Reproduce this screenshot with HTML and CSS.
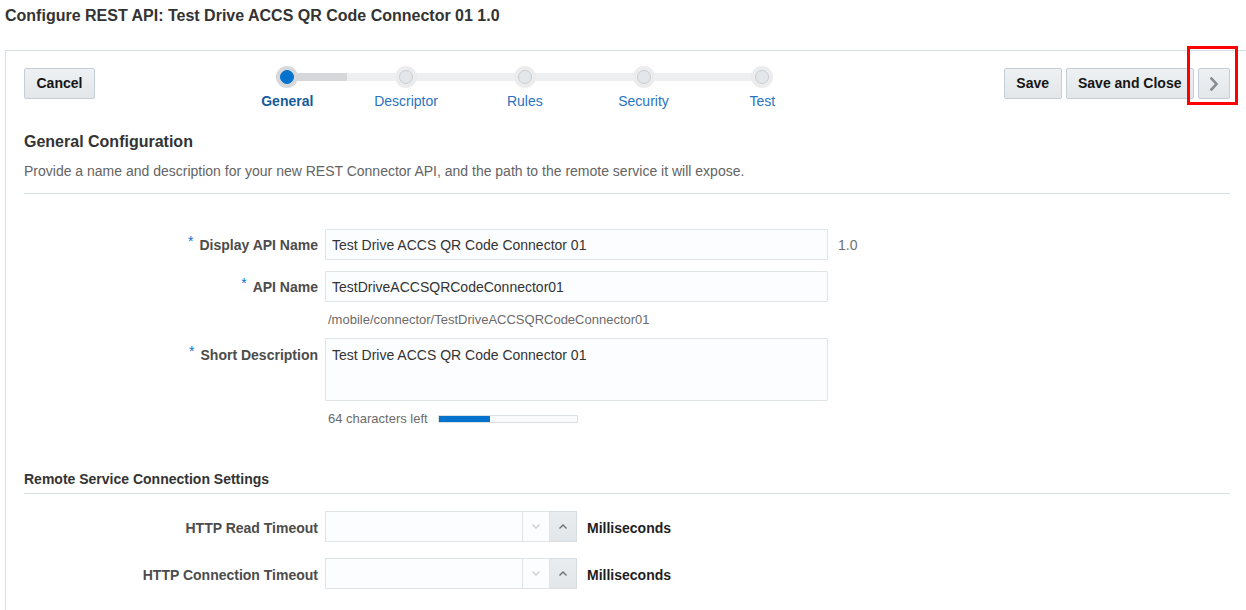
FILE: index.html
```html
<!DOCTYPE html>
<html lang="en">
<head>
<meta charset="utf-8">
<title>Configure REST API</title>
<link rel="stylesheet" href="styles.css">
</head>
<body>
<div class="page">
  <h1 class="title">Configure REST API: Test Drive ACCS QR Code Connector 01 1.0</h1>
  <div class="panel">
    <div class="header">
      <button class="btn btn-cancel">Cancel</button>
      <div class="train">
        <div class="step active"><span class="dot"></span><span class="step-label">General</span></div>
        <div class="step"><span class="dot"></span><span class="step-label">Descriptor</span></div>
        <div class="step"><span class="dot"></span><span class="step-label">Rules</span></div>
        <div class="step"><span class="dot"></span><span class="step-label">Security</span></div>
        <div class="step"><span class="dot"></span><span class="step-label">Test</span></div>
      </div>
      <div class="actions">
        <button class="btn">Save</button>
        <button class="btn">Save and Close</button>
        <button class="btn btn-next" aria-label="Next">
          <svg width="10" height="14" viewBox="0 0 10 14"><path d="M2.5 1.5 L7.5 7 L2.5 12.5" fill="none" stroke="#868b90" stroke-width="2.6" stroke-linecap="square"/></svg>
        </button>
        <span class="highlight"></span>
      </div>
    </div>

    <h2 class="section-title">General Configuration</h2>
    <p class="section-desc">Provide a name and description for your new REST Connector API, and the path to the remote service it will expose.</p>
    <div class="divider"></div>

    <div class="form">
      <div class="row row-first">
        <label class="label"><span class="req">*</span>Display API Name</label>
        <input class="field" type="text" value="Test Drive ACCS QR Code Connector 01">
        <span class="version">1.0</span>
      </div>
      <div class="row row-second">
        <label class="label"><span class="req">*</span>API Name</label>
        <input class="field" type="text" value="TestDriveACCSQRCodeConnector01">
      </div>
      <div class="row row-help">
        <span class="label"></span>
        <span class="help">/mobile/connector/TestDriveACCSQRCodeConnector01</span>
      </div>
      <div class="row row-top row-area">
        <label class="label label-top"><span class="req">*</span>Short Description</label>
        <textarea class="field area">Test Drive ACCS QR Code Connector 01</textarea>
      </div>
      <div class="row row-counter">
        <span class="label"></span>
        <span class="help">64 characters left</span>
        <span class="meter"><span class="meter-fill" style="width:51px"></span></span>
      </div>
    </div>

    <h3 class="subsection-title">Remote Service Connection Settings</h3>
    <div class="divider divider-sub"></div>

    <div class="form">
      <div class="row row-spin1">
        <label class="label">HTTP Read Timeout</label>
        <div class="spinner">
          <input class="spin-input" type="text" value="">
          <span class="spin-btn spin-down"><svg width="10" height="7" viewBox="0 0 10 7"><path d="M1.5 1.5 L5 5 L8.5 1.5" fill="none" stroke="#c9ced3" stroke-width="1.4"/></svg></span>
          <span class="spin-btn spin-up"><svg width="10" height="7" viewBox="0 0 10 7"><path d="M1.5 5.5 L5 2 L8.5 5.5" fill="none" stroke="#6b7075" stroke-width="1.4"/></svg></span>
        </div>
        <span class="unit">Milliseconds</span>
      </div>
      <div class="row row-spin2">
        <label class="label">HTTP Connection Timeout</label>
        <div class="spinner">
          <input class="spin-input" type="text" value="">
          <span class="spin-btn spin-down"><svg width="10" height="7" viewBox="0 0 10 7"><path d="M1.5 1.5 L5 5 L8.5 1.5" fill="none" stroke="#c9ced3" stroke-width="1.4"/></svg></span>
          <span class="spin-btn spin-up"><svg width="10" height="7" viewBox="0 0 10 7"><path d="M1.5 5.5 L5 2 L8.5 5.5" fill="none" stroke="#6b7075" stroke-width="1.4"/></svg></span>
        </div>
        <span class="unit">Milliseconds</span>
      </div>
    </div>
  </div>
</div>
</body>
</html>
```
FILE: styles.css
```css
* { box-sizing: border-box; }
html, body {
  margin: 0;
  padding: 0;
  background: #ffffff;
  overflow: hidden;
}
body {
  font-family: "Liberation Sans", Arial, sans-serif;
  color: #333333;
  font-size: 14px;
}
.page {
  padding: 0 0 0 5px;
  width: 1260px;
}
.title {
  margin: 0;
  padding-top: 6px;
  font-size: 16px;
  line-height: 20px;
  font-weight: bold;
  color: #333333;
}
.panel {
  margin-top: 24px;
  width: 1244px;
  padding: 14px 18px 40px 18px;
  border-top: 1px solid #d6dfe6;
  border-left: 1px solid #d6dfe6;
  border-right: 1px solid #d6dfe6;
}

/* header */
.header {
  display: flex;
  align-items: flex-start;
  height: 45px;
}
.btn {
  font-family: "Liberation Sans", Arial, sans-serif;
  font-size: 14px;
  font-weight: bold;
  color: #151515;
  height: 31px;
  padding: 0 11.5px;
  margin: 3px 0 0 0;
  border: 1px solid #c4ced7;
  border-radius: 2px;
  background: linear-gradient(#eef1f3, #e3e7ea);
  line-height: 29px;
}
.actions {
  margin-left: auto;
  display: flex;
  gap: 4px;
  position: relative;
}
.btn-next {
  width: 32px;
  padding: 0;
  display: flex;
  align-items: center;
  justify-content: center;
}
.highlight {
  position: absolute;
  right: -8px;
  top: -19px;
  width: 51px;
  height: 59px;
  border: 3px solid #ff0000;
  pointer-events: none;
}

/* train */
.train {
  margin-left: 133px;
  display: flex;
  position: relative;
}
.train::before {
  content: "";
  position: absolute;
  left: 59px;
  right: 59px;
  top: 8px;
  height: 8px;
  background: #eeeff0;
}
.train::after {
  content: "";
  position: absolute;
  left: 59px;
  width: 60px;
  top: 8px;
  height: 8px;
  background: #d5d7da;
}
.step {
  width: 118.75px;
  display: flex;
  flex-direction: column;
  align-items: center;
  position: relative;
  z-index: 1;
}
.dot {
  display: block;
  width: 14px;
  height: 14px;
  margin-top: 5px;
  border-radius: 50%;
  background: #e3e7ea;
  border: 1px solid #c6cdd3;
  box-shadow: 0 0 0 4px #ececed;
}
.step.active .dot {
  background: #0572ce;
  border-color: #0572ce;
  box-shadow: 0 0 0 4px #d6d8db;
}
.step-label {
  margin-top: 8px;
  line-height: 18px;
  font-size: 14px;
  color: #2a73c2;
}
.step.active .step-label {
  font-weight: bold;
  color: #145c9e;
}

/* sections */
.section-title {
  margin: 22px 0 0 0;
  font-size: 16px;
  line-height: 20px;
  font-weight: bold;
  color: #333333;
}
.section-desc {
  margin: 9px 0 0 0;
  font-size: 14px;
  line-height: 20px;
  color: #646464;
}
.divider {
  margin-top: 12px;
  height: 1px;
  background: #d6dfe6;
}
.subsection-title {
  margin: 43px 0 0 0;
  font-size: 14px;
  line-height: 18px;
  font-weight: bold;
  color: #333333;
}
.divider-sub {
  margin-top: 5px;
}

/* form */
.form {
  display: flex;
  flex-direction: column;
}
.row {
  display: flex;
  align-items: center;
  gap: 7px;
}
.row-top { align-items: flex-start; }
.row-first { margin-top: 35px; }
.row-second { margin-top: 11px; }
.row-help { margin-top: 10px; }
.row-area { margin-top: 10px; }
.row-counter { margin-top: 10px; }
.row-spin1 { margin-top: 17px; }
.row-spin2 { margin-top: 16px; }
.label {
  width: 294px;
  flex: none;
  text-align: right;
  font-size: 14px;
  font-weight: bold;
  line-height: 18px;
  color: #4c4c4c;
}
.row-spin1 .label, .row-spin2 .label { padding-top: 2px; }
.label-top { padding-top: 8px; }
.req {
  color: #0572ce;
  font-weight: normal;
  font-size: 14px;
  position: relative;
  top: -4px;
  margin-right: 6px;
}
.field {
  width: 503px;
  height: 31px;
  padding: 0 6px;
  border: 1px solid #dfe4e7;
  border-radius: 1px;
  background: #fcfdfe;
  font-family: "Liberation Sans", Arial, sans-serif;
  font-size: 14px;
  color: #333333;
  outline: none;
}
.area {
  height: 63px;
  padding: 7px 6px;
  line-height: 18px;
  resize: none;
  display: block;
}
.version {
  margin-left: 3px;
  color: #707070;
  font-size: 14px;
}
.help {
  padding-left: 3px;
  font-size: 13px;
  line-height: 16px;
  color: #6b6b6b;
}
.row-counter .help { margin-right: 3px; }
.meter {
  display: block;
  width: 140px;
  height: 8px;
  border: 1px solid #d9dfe3;
  background: #f8fafb;
  border-radius: 1px;
}
.meter-fill {
  display: block;
  height: 6px;
  background: #0572ce;
}
.spinner {
  display: flex;
  height: 31px;
}
.spin-input {
  width: 197px;
  height: 31px;
  border: 1px solid #dfe4e7;
  border-right: none;
  background: #fcfdfe;
  font-family: "Liberation Sans", Arial, sans-serif;
  font-size: 14px;
  outline: none;
  padding: 0 6px;
}
.spin-btn {
  display: flex;
  align-items: center;
  justify-content: center;
  height: 31px;
}
.spin-down {
  width: 28px;
  background: #fcfdfe;
  border: 1px solid #dfe4e7;
}
.spin-up {
  width: 27px;
  background: linear-gradient(#eaedef, #e2e6e9);
  border: 1px solid #d6dce0;
  border-left: none;
}
.unit {
  margin-left: 3px;
  padding-top: 2px;
  font-size: 14px;
  font-weight: bold;
  color: #1e1e1e;
}
```
